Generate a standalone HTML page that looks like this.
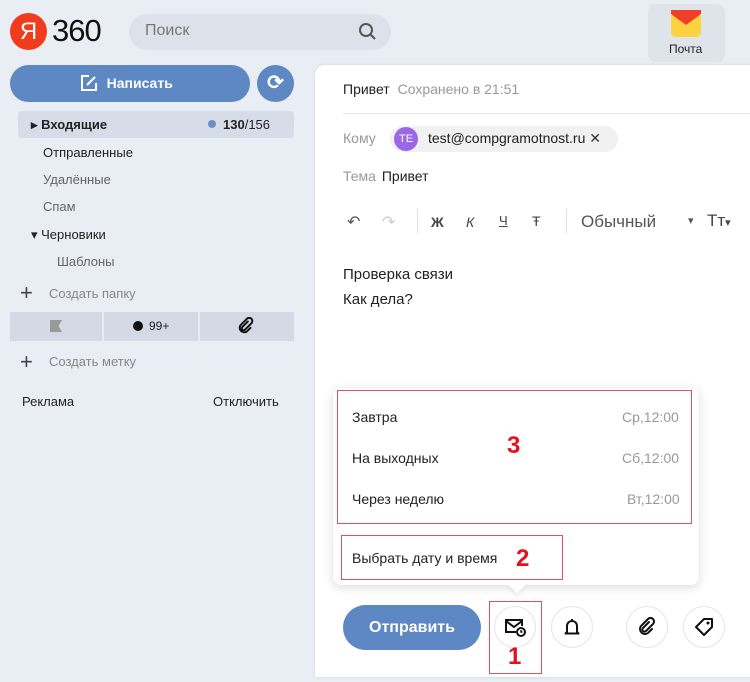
<!DOCTYPE html>
<html><head><meta charset="utf-8"><style>
*{box-sizing:border-box;margin:0;padding:0}
body{width:750px;height:682px;background:#e9edf4;font-family:"Liberation Sans",sans-serif;position:relative;overflow:hidden;color:#222}
.a{position:absolute}
.nav{font-size:13px;color:#222}
.gray{color:#888}
.rb{position:absolute;border:1.5px solid #e05060}
.red{color:#e8101e;font-weight:900;font-size:24px;position:absolute}
.cb{position:absolute;width:42px;height:42px;border-radius:50%;border:1px solid #e5e5e5;background:#fff;display:flex;align-items:center;justify-content:center}
</style></head><body>
<div class="a" style="left:10px;top:13px;width:37px;height:37px;border-radius:50%;background:#f03b1d;color:#fff;font-size:24px;text-align:center;line-height:37px">Я</div>
<div class="a" style="left:52px;top:13px;font-size:31px;color:#111;letter-spacing:-1px">360</div>
<div class="a" style="left:129px;top:14px;width:262px;height:36px;border-radius:18px;background:#dde1e9"></div>
<div class="a" style="left:145px;top:22px;font-size:16px;color:#777">Поиск</div>
<svg class="a" style="left:358px;top:22px" width="20" height="20" viewBox="0 0 20 20"><circle cx="8" cy="8" r="6" fill="none" stroke="#555" stroke-width="2"/><path d="M12.5 12.5L17 17" stroke="#555" stroke-width="2"/></svg>
<div class="a" style="left:648px;top:4px;width:77px;height:58px;border-radius:8px;background:#dfe3ea"></div>
<svg class="a" style="left:669px;top:6px" width="34" height="32" viewBox="0 0 34 32"><rect x="2" y="6" width="30" height="25" rx="5" fill="#fcd33f"/><path d="M2 8l15 11 15-11V4H2z" fill="#ef3f2a"/></svg>
<div class="a" style="left:669px;top:42px;font-size:12px;color:#222">Почта</div>

<div class="a" style="left:10px;top:65px;width:240px;height:37px;border-radius:19px;background:#5d88c3;color:#fff;font-weight:bold;font-size:14px;text-align:center;line-height:37px">&nbsp;&nbsp;&nbsp;&nbsp;&nbsp;Написать</div>
<svg class="a" style="left:80px;top:74px" width="18" height="18" viewBox="0 0 18 18"><path d="M9 2H2v14h14V9" fill="none" stroke="#fff" stroke-width="2"/><path d="M7 11l8-8" stroke="#fff" stroke-width="2"/></svg>
<div class="a" style="left:257px;top:65px;width:37px;height:37px;border-radius:50%;background:#5d88c3;color:#fff;font-size:20px;text-align:center;line-height:37px;font-weight:bold">⟳</div>
<div class="a" style="left:18px;top:111px;width:276px;height:27px;border-radius:4px;background:#d7dde8"></div>
<div class="a nav" style="left:31px;top:117px;font-weight:bold">▸ Входящие</div>
<div class="a" style="left:208px;top:120px;width:8px;height:8px;border-radius:50%;background:#6b8ec7"></div>
<div class="a nav" style="left:223px;top:117px"><b>130</b>/156</div>
<div class="a nav" style="left:43px;top:145px">Отправленные</div>
<div class="a nav gray" style="left:43px;top:172px;color:#666">Удалённые</div>
<div class="a nav" style="left:43px;top:199px;color:#666">Спам</div>
<div class="a nav" style="left:31px;top:227px">▾ Черновики</div>
<div class="a nav" style="left:57px;top:254px;color:#666">Шаблоны</div>
<div class="a" style="left:20px;top:280px;font-size:22px;color:#444">+</div>
<div class="a nav" style="left:49px;top:286px;color:#888">Создать папку</div>
<div class="a" style="left:10px;top:312px;width:284px;height:29px;background:#d3dae6"></div>
<div class="a" style="left:102px;top:312px;width:2px;height:29px;background:#e6eaf1"></div>
<div class="a" style="left:198px;top:312px;width:2px;height:29px;background:#e6eaf1"></div>
<div class="a" style="left:50px;top:320px;width:12px;height:12px;background:#999;clip-path:polygon(0 0,100% 0,70% 50%,100% 100%,0 100%)"></div>
<div class="a" style="left:133px;top:321px;width:10px;height:10px;border-radius:50%;background:#111"></div>
<div class="a" style="left:149px;top:319px;font-size:12px">99+</div>
<svg class="a" style="left:237px;top:317px" width="18" height="18" viewBox="0 0 20 20"><path d="M12 5l-6 6a2 2 0 003 3l7-7a3.5 3.5 0 00-5-5L4 9a5 5 0 007 7l4-4" fill="none" stroke="#111" stroke-width="2.2" stroke-linecap="round"/></svg>
<div class="a" style="left:20px;top:349px;font-size:22px;color:#444">+</div>
<div class="a nav" style="left:49px;top:354px;color:#888">Создать метку</div>
<div class="a nav" style="left:22px;top:394px">Реклама</div>
<div class="a nav" style="left:213px;top:394px">Отключить</div>

<div class="a" style="left:315px;top:65px;width:440px;height:612px;background:#fff;border-radius:10px 0 0 0;box-shadow:0 0 3px rgba(0,0,0,.1)"></div>
<div class="a" style="left:343px;top:81px;font-size:14px">Привет <span style="color:#999;margin-left:4px">Сохранено в 21:51</span></div>
<div class="a" style="left:343px;top:113px;width:407px;height:1px;background:#e5e5e5"></div>
<div class="a" style="left:343px;top:130px;font-size:14px;color:#999">Кому</div>
<div class="a" style="left:390px;top:126px;width:228px;height:26px;border-radius:13px;background:#f1f1f1"></div>
<div class="a" style="left:394px;top:127px;width:24px;height:24px;border-radius:50%;background:#9b67e6;color:#fff;font-size:11px;text-align:center;line-height:24px">TE</div>
<div class="a" style="left:428px;top:130px;font-size:14px">test@compgramotnost.ru <span style="color:#333">✕</span></div>
<div class="a" style="left:343px;top:168px;font-size:14px;color:#999">Тема <span style="color:#222;margin-left:2px">Привет</span></div>
<div class="a" style="left:347px;top:212px;font-size:16px;color:#555">↶</div>
<div class="a" style="left:382px;top:212px;font-size:16px;color:#ccc">↷</div>
<div class="a" style="left:417px;top:209px;width:1px;height:24px;background:#ddd"></div>
<div class="a" style="left:431px;top:214px;font-size:14px;font-weight:bold;color:#444">Ж</div>
<div class="a" style="left:466px;top:214px;font-size:14px;font-style:italic;color:#444">К</div>
<div class="a" style="left:499px;top:213px;font-size:13px;color:#444;text-decoration:underline">Ч</div>
<div class="a" style="left:532px;top:213px;font-size:14px;color:#444">Ŧ</div>
<div class="a" style="left:566px;top:209px;width:1px;height:24px;background:#ddd"></div>
<div class="a" style="left:581px;top:212px;font-size:17px;color:#555">Обычный</div>
<div class="a" style="left:688px;top:214px;font-size:11px;color:#555">▾</div>
<div class="a" style="left:707px;top:211px;font-size:17px;color:#444">Tт<span style="font-size:11px">▾</span></div>
<div class="a" style="left:343px;top:262px;font-size:15px;line-height:25px">Проверка связи<br>Как дела?</div>

<div class="a" style="left:333px;top:388px;width:366px;height:197px;background:#fff;border-radius:8px;box-shadow:0 2px 10px rgba(0,0,0,.15)"></div>
<div class="a" style="left:511px;top:579px;width:12px;height:12px;background:#fff;transform:rotate(45deg);box-shadow:2px 2px 4px rgba(0,0,0,.08)"></div>
<div class="rb" style="left:337px;top:390px;width:355px;height:134px"></div>
<div class="a" style="left:352px;top:409px;font-size:14px">Завтра</div>
<div class="a" style="left:352px;top:450px;font-size:14px">На выходных</div>
<div class="a" style="left:352px;top:491px;font-size:14px">Через неделю</div>
<div class="a" style="left:622px;top:409px;font-size:14px;color:#999">Ср,12:00</div>
<div class="a" style="left:622px;top:450px;font-size:14px;color:#999">Сб,12:00</div>
<div class="a" style="left:627px;top:491px;font-size:14px;color:#999">Вт,12:00</div>
<div class="red" style="left:507px;top:432px">3</div>
<div class="rb" style="left:341px;top:535px;width:222px;height:45px"></div>
<div class="a" style="left:352px;top:550px;font-size:14px">Выбрать дату и время</div>
<div class="red" style="left:516px;top:545px">2</div>

<div class="a" style="left:343px;top:605px;width:138px;height:45px;border-radius:23px;background:#5d88c3;color:#fff;font-weight:bold;font-size:16px;text-align:center;line-height:45px">Отправить</div>
<div class="cb" style="left:494px;top:606px"><svg width="24" height="24" viewBox="0 0 24 24"><path d="M13 17H3V5h16v6" fill="none" stroke="#111" stroke-width="2"/><path d="M3 6l8 6 8-6" fill="none" stroke="#111" stroke-width="2"/><circle cx="18" cy="17" r="4" fill="#fff" stroke="#111" stroke-width="2"/><path d="M18 15v2h1.5" stroke="#111" stroke-width="1.4" fill="none"/></svg></div>
<div class="rb" style="left:489px;top:601px;width:53px;height:73px"></div>
<div class="red" style="left:508px;top:643px">1</div>
<div class="cb" style="left:551px;top:606px"><svg width="20" height="20" viewBox="0 0 20 20"><path d="M5 15V9a5 5 0 0110 0v6l1.5 1.5h-13z" fill="none" stroke="#111" stroke-width="2" stroke-linejoin="round"/><path d="M10 2v2" stroke="#111" stroke-width="2"/></svg></div>
<div class="cb" style="left:626px;top:606px"><svg width="20" height="20" viewBox="0 0 20 20"><path d="M12 5l-6 6a2 2 0 003 3l7-7a3.5 3.5 0 00-5-5L4 9a5 5 0 007 7l4-4" fill="none" stroke="#111" stroke-width="2" stroke-linecap="round"/></svg></div>
<div class="cb" style="left:683px;top:606px"><svg width="22" height="22" viewBox="0 0 22 22"><path d="M3 11l8-8h8v8l-8 8z" fill="none" stroke="#111" stroke-width="2" stroke-linejoin="round"/><circle cx="15" cy="7" r="1.5" fill="#111"/></svg></div>
</body></html>
